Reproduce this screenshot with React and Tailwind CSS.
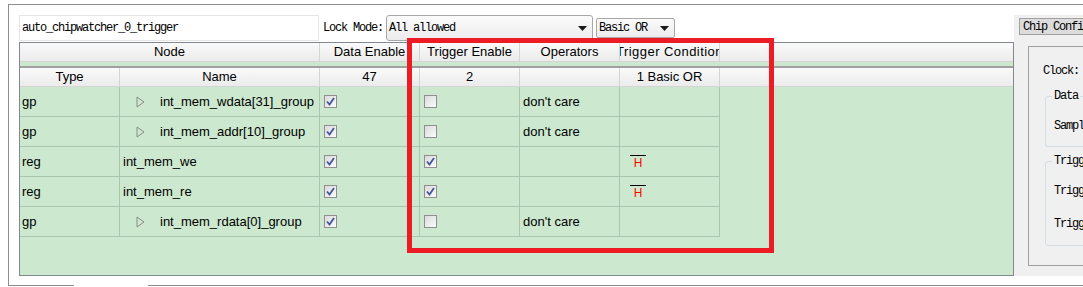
import React from "react";

// rows of the trigger table
const rows = [
  { type: "gp", name: "int_mem_wdata[31]_group", group: true, data: true, trig: false, op: "don't care", cond: false },
  { type: "gp", name: "int_mem_addr[10]_group", group: true, data: true, trig: false, op: "don't care", cond: false },
  { type: "reg", name: "int_mem_we", group: false, data: true, trig: true, op: "", cond: true },
  { type: "reg", name: "int_mem_re", group: false, data: true, trig: true, op: "", cond: true },
  { type: "gp", name: "int_mem_rdata[0]_group", group: true, data: true, trig: false, op: "don't care", cond: false },
];

const mono = { fontFamily: '"Liberation Mono", monospace' };

const CheckBox = ({ checked }) => (
  <div className="w-[13px] h-[13px] border border-[#8f8f8f] bg-gradient-to-br from-[#dadada] to-[#fbfbfb] flex items-center justify-center">
    {checked && (
      <svg width="9" height="9" viewBox="0 0 9 9">
        <path d="M1 4.5 L3.5 7.5 L8 1" fill="none" stroke="#41579a" strokeWidth="1.8" />
      </svg>
    )}
  </div>
);

const Arrow = () => (
  <svg width="9" height="5" viewBox="0 0 9 5">
    <path d="M0 0 H9 L4.5 5 Z" fill="#1a1a1a" />
  </svg>
);

const Expander = () => (
  <svg width="9" height="12" viewBox="0 0 9 12" className="shrink-0">
    <path d="M1 1 L8 6 L1 11 Z" fill="none" stroke="#8a8a8a" strokeWidth="1" />
  </svg>
);

const HeadCell = ({ w, children, className = "" }) => (
  <div
    className={`${w} h-full shrink-0 border-r border-[#d5d5d5] flex items-center justify-center overflow-hidden whitespace-nowrap ${className}`}
  >
    {children}
  </div>
);

const Cell = ({ w, children, className = "" }) => (
  <div className={`${w} h-full shrink-0 border-r border-[#adc5ae] flex items-center overflow-hidden whitespace-nowrap ${className}`}>
    {children}
  </div>
);

function Table() {
  return (
    <div
      className="w-[995px] h-[234px] border border-[#828790] bg-[#cce8cf] text-[13px] text-black flex flex-col"
      style={{ fontFamily: '"Liberation Sans", Arial, sans-serif' }}
    >
      <div className="h-[19px] flex border-b border-[#d5d5d5] bg-gradient-to-b from-[#fafafa] to-[#ebebeb]">
        <HeadCell w="w-[300px]">Node</HeadCell>
        <HeadCell w="w-[100px]">Data Enable</HeadCell>
        <HeadCell w="w-[100px]">Trigger Enable</HeadCell>
        <HeadCell w="w-[100px]">Operators</HeadCell>
        <HeadCell w="w-[100px]" className="tracking-[0.45px]">Trigger Condition</HeadCell>
        <div className="flex-1" />
      </div>
      <div className="h-[4px]" />
      <div className="h-[2px] bg-[#a0a0a0]" />
      <div className="h-[19px] flex border-b border-[#d5d5d5] bg-gradient-to-b from-[#fafafa] to-[#ebebeb]">
        <HeadCell w="w-[100px]">Type</HeadCell>
        <HeadCell w="w-[200px]">Name</HeadCell>
        <HeadCell w="w-[100px]">47</HeadCell>
        <HeadCell w="w-[100px]">2</HeadCell>
        <HeadCell w="w-[100px]"></HeadCell>
        <HeadCell w="w-[100px]">1 Basic OR</HeadCell>
        <div className="flex-1" />
      </div>
      {rows.map((r, i) => (
        <div key={i} className="h-[30px] w-[700px] flex border-b border-[#adc5ae]">
          <Cell w="w-[100px]" className="pl-[2px]">{r.type}</Cell>
          <Cell w="w-[200px]" className={r.group ? "pl-[16px]" : "pl-[3px]"}>
            {r.group && <Expander />}
            <span className={r.group ? "ml-[15px]" : ""}>{r.name}</span>
          </Cell>
          <Cell w="w-[100px]" className="pl-[4px]"><CheckBox checked={r.data} /></Cell>
          <Cell w="w-[100px]" className="pl-[4px]"><CheckBox checked={r.trig} /></Cell>
          <Cell w="w-[100px]" className="pl-[3px]">{r.op}</Cell>
          <Cell w="w-[100px]" className="pl-[10px]">
            {r.cond && (
              <div className="w-[16px] border-t-[1.5px] border-black flex justify-center pt-[1px] mt-[2px] text-[12px] leading-[13px] text-[#ff0000]">
                H
              </div>
            )}
          </Cell>
        </div>
      ))}
    </div>
  );
}

function SidePanel() {
  return (
    <div className="flex-1 h-[261px] bg-[#f0f0f0] text-[12px] tracking-[-1.2px] text-black overflow-hidden" style={mono}>
      <div className="pt-[3px] pl-[5px]">
        <div className="w-[120px] h-[17px] border border-[#a0a0a0] bg-[#dcdcdc] flex items-center pl-[3px] whitespace-nowrap">
          Chip Configuration
        </div>
      </div>
      <div className="pl-[14px] pt-[11px]">
        <div className="w-[160px] h-[220px] border border-[#a0a0a0] pt-[17px] pl-[14px]">
          <div className="h-[14px] leading-[14px]">Clock:</div>
          <div className="ml-[2px] mt-[18px] w-[120px] h-[51px] border border-[#d3dde3] rounded-[3px] relative pt-[22px] pl-[8px]">
            <span className="absolute -top-[8px] left-[6px] bg-[#f0f0f0] px-[2px] leading-[14px]">Data</span>
            <div className="leading-[14px]">Sampling</div>
          </div>
          <div className="ml-[2px] mt-[14px] w-[120px] h-[85px] border border-[#d3dde3] rounded-[3px] relative pt-[22px] pl-[8px]">
            <span className="absolute -top-[8px] left-[6px] bg-[#f0f0f0] px-[2px] leading-[14px]">Trigger</span>
            <div className="leading-[14px]">Trigger</div>
            <div className="leading-[14px] mt-[19px]">Trigger</div>
          </div>
        </div>
      </div>
    </div>
  );
}

export default function App() {
  return (
    <div className="w-[1083px] h-[287px] bg-white relative overflow-hidden">
      <div className="pt-[4px] pl-[8px]">
        <div className="h-[281px] border-t border-l border-[#8c8c8c] pt-[10px] pl-[10px] flex">
          <div className="w-[995px] shrink-0 flex flex-col">
            <div className="h-[27px] flex items-start text-[12px] tracking-[-1.2px] text-black" style={mono}>
              <div className="w-[300px] h-[26px] border border-[#e6e6e6] bg-white flex items-center pl-[2px]">
                auto_chipwatcher_0_trigger
              </div>
              <div className="h-[26px] flex items-center ml-[4px] w-[63px]">Lock Mode:</div>
              <div className="w-[207px] h-[26px] border border-[#a8a8a8] rounded-[3px] bg-gradient-to-b from-[#fbfbfb] to-[#ececec] flex items-center pl-[2px] pr-[5px]">
                <span className="flex-1">All allowed</span>
                <Arrow />
              </div>
              <div className="ml-[3px] mt-[3px] w-[79px] h-[20px] border border-[#a8a8a8] rounded-[2px] bg-gradient-to-b from-[#fbfbfb] to-[#ececec] flex items-center pl-[2px] pr-[5px]">
                <span className="flex-1">Basic OR</span>
                <Arrow />
              </div>
            </div>
            <Table />
          </div>
          <SidePanel />
        </div>
        <div className="flex h-[1px]">
          <div className="w-[66px] bg-[#8c8c8c]" />
          <div className="w-[74px]" />
          <div className="flex-1 bg-[#8c8c8c]" />
        </div>
      </div>
      {/* red annotation frame */}
      <div className="absolute left-[407px] top-[38px] w-[367px] h-[215px] border-[5px] border-[#ed1c24]" />
    </div>
  );
}
